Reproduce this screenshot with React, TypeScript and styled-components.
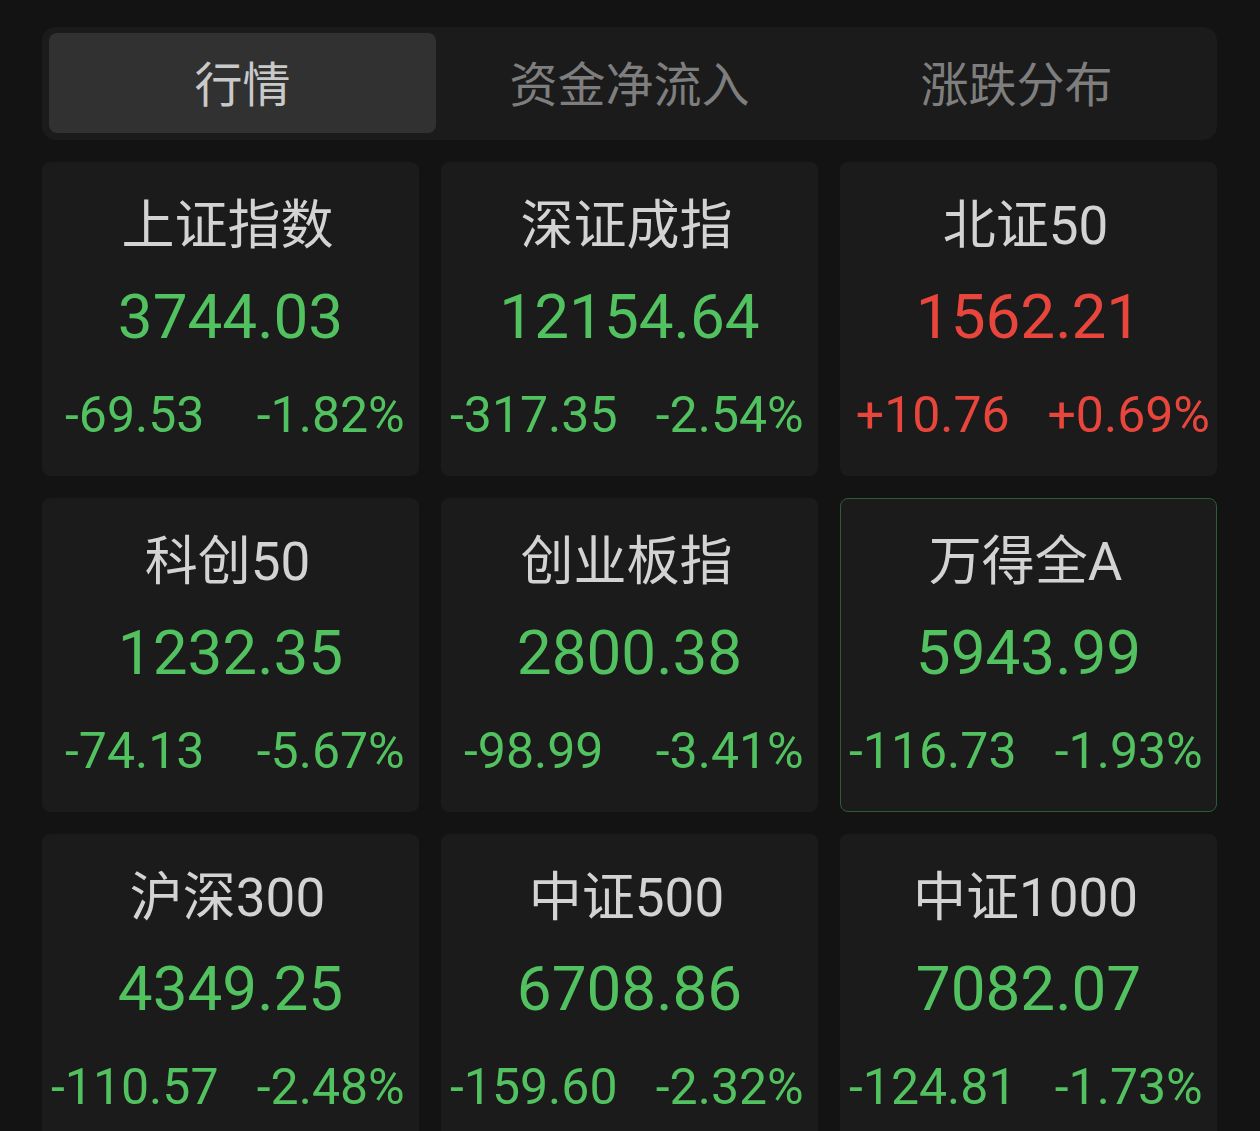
import React from "react";
import styled, { createGlobalStyle } from "styled-components";

const GlobalStyle = createGlobalStyle`
  html, body {
    margin: 0;
    padding: 0;
    background: #131313;
  }
  * { box-sizing: border-box; }
`;

const Page = styled.div`
  padding: 27px 43px 0 42px;
  width: 1260px;
  font-family: Roboto, "Noto Sans CJK SC", sans-serif;
`;

const TabBar = styled.div`
  display: grid;
  grid-template-columns: repeat(3, 1fr);
  padding: 6px 7px 7px;
  height: 113px;
  background: #1b1b1b;
  border-radius: 14px;
`;

const Tab = styled.div<{ $active?: boolean }>`
  display: flex;
  align-items: center;
  justify-content: center;
  border-radius: 8px;
  background: ${(p) => (p.$active ? "#313131" : "transparent")};
  color: ${(p) => (p.$active ? "#c9c9c9" : "#7e7e7e")};
  font-family: "Noto Sans CJK SC", sans-serif;
  font-size: 48px;
  line-height: 1;
  padding-bottom: 4px;
`;

const Grid = styled.div`
  display: grid;
  grid-template-columns: repeat(3, 377px);
  grid-auto-rows: 314px;
  gap: 22px;
  margin-top: 22px;
`;

const Card = styled.div<{ $selected?: boolean }>`
  display: grid;
  grid-template-rows: 122px 64px 1fr;
  background: #1b1b1b;
  border-radius: 8px;
  border: 1.5px solid ${(p) => (p.$selected ? "#2e5c37" : "transparent")};
`;

const Title = styled.div`
  display: flex;
  align-items: center;
  justify-content: center;
  color: #d3d3d3;
  font-size: 53px;
  line-height: 1;
  padding-top: 4px;
  padding-right: 6px;
  white-space: nowrap;
`;

const Value = styled.div<{ $up?: boolean }>`
  display: flex;
  align-items: center;
  justify-content: center;
  color: ${(p) => (p.$up ? "#e8463d" : "#52c15f")};
  font-size: 62px;
  line-height: 1;
  white-space: nowrap;
`;

const Changes = styled.div<{ $up?: boolean }>`
  display: grid;
  grid-template-columns: 1fr 1fr;
  column-gap: 8px;
  align-items: center;
  color: ${(p) => (p.$up ? "#e8463d" : "#52c15f")};
  font-size: 50px;
  line-height: 1;
  padding-top: 6px;
`;

const ChangeText = styled.span`
  text-align: center;
  white-space: nowrap;
  &:nth-child(2) {
    padding-left: 9px;
  }
`;

type Item = {
  name: string;
  value: string;
  change: string;
  pct: string;
  up?: boolean;
  selected?: boolean;
};

const items: Item[] = [
  { name: "上证指数", value: "3744.03", change: "-69.53", pct: "-1.82%" },
  { name: "深证成指", value: "12154.64", change: "-317.35", pct: "-2.54%" },
  { name: "北证50", value: "1562.21", change: "+10.76", pct: "+0.69%", up: true },
  { name: "科创50", value: "1232.35", change: "-74.13", pct: "-5.67%" },
  { name: "创业板指", value: "2800.38", change: "-98.99", pct: "-3.41%" },
  { name: "万得全A", value: "5943.99", change: "-116.73", pct: "-1.93%", selected: true },
  { name: "沪深300", value: "4349.25", change: "-110.57", pct: "-2.48%" },
  { name: "中证500", value: "6708.86", change: "-159.60", pct: "-2.32%" },
  { name: "中证1000", value: "7082.07", change: "-124.81", pct: "-1.73%" },
];

export default function App() {
  return (
    <>
      <GlobalStyle />
      <Page>
        <TabBar>
          <Tab $active>行情</Tab>
          <Tab>资金净流入</Tab>
          <Tab>涨跌分布</Tab>
        </TabBar>
        <Grid>
          {items.map((it) => (
            <Card key={it.name} $selected={it.selected}>
              <Title>{it.name}</Title>
              <Value $up={it.up}>{it.value}</Value>
              <Changes $up={it.up}>
                <ChangeText>{it.change}</ChangeText>
                <ChangeText>{it.pct}</ChangeText>
              </Changes>
            </Card>
          ))}
        </Grid>
      </Page>
    </>
  );
}
